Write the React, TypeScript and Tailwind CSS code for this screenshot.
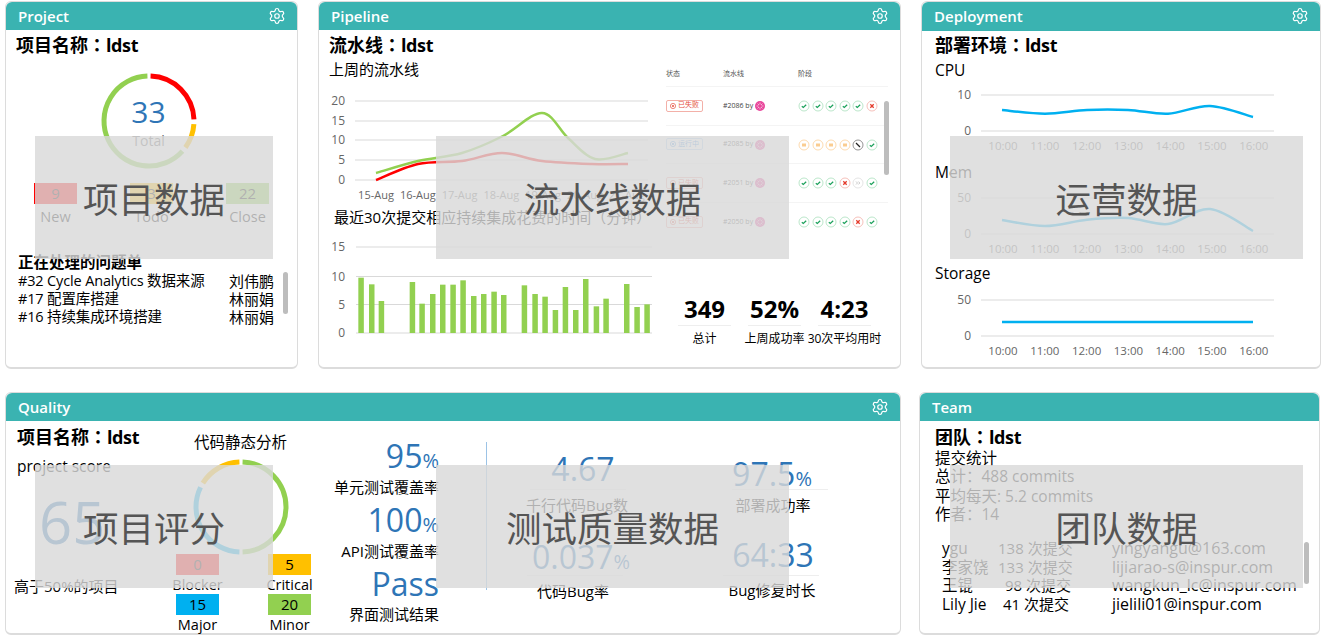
import type { ReactNode } from "react";
import { Settings } from "lucide-react";

const font = "font-['Open_Sans','Noto_Sans_CJK_SC',sans-serif]";

type Pt = [number, number];

// catmull-rom through the points, close enough to the excel style curves
function smooth(pts: Pt[]) {
  let d = `M${pts[0][0]} ${pts[0][1]}`;
  for (let i = 0; i < pts.length - 1; i++) {
    const p0 = pts[i - 1] ?? pts[i];
    const p1 = pts[i];
    const p2 = pts[i + 1];
    const p3 = pts[i + 2] ?? p2;
    const c1x = p1[0] + (p2[0] - p0[0]) / 6;
    const c1y = p1[1] + (p2[1] - p0[1]) / 6;
    const c2x = p2[0] - (p3[0] - p1[0]) / 6;
    const c2y = p2[1] - (p3[1] - p1[1]) / 6;
    d += ` C${c1x} ${c1y} ${c2x} ${c2y} ${p2[0]} ${p2[1]}`;
  }
  return d;
}

function Card({
  title,
  gear,
  className,
  headerClass = "h-[28px]",
  children,
}: {
  title: string;
  gear?: boolean;
  className: string;
  headerClass?: string;
  children: ReactNode;
}) {
  return (
    <div className={`relative rounded-md border border-[#dcdcdc] border-b-2 bg-white ${className}`}>
      <div
        className={`flex items-center justify-between rounded-t-md bg-[#3ab3b1] pl-[12px] pr-[11px] text-[15px] font-semibold text-white ${headerClass}`}
      >
        <span>{title}</span>
        {gear && <Settings size={18} strokeWidth={1.6} className="-mt-[1px]" />}
      </div>
      {children}
    </div>
  );
}

function Heading({ name }: { name: string }) {
  return (
    <div className="h-[24px] -translate-y-[2px] whitespace-nowrap text-[18px] font-bold leading-[24px]">
      {name}
      <span className="font-['Noto_Sans_CJK_TC',sans-serif]">：</span>
      <span className="tracking-[-0.4px]">ldst</span>
    </div>
  );
}

function Overlay({ text, className }: { text: string; className: string }) {
  return (
    <div
      className={`absolute flex h-[123px] items-center justify-center bg-[rgba(217,217,217,0.81)] pt-[4px] text-[35.5px] text-[#555] ${className}`}
    >
      {text}
    </div>
  );
}

function Ring({ segments }: { segments: { from: number; to: number; color: string }[] }) {
  const r = 45;
  const arc = (from: number, to: number) => {
    const a = ((from - 90) * Math.PI) / 180;
    const b = ((to - 90) * Math.PI) / 180;
    const large = to - from > 180 ? 1 : 0;
    return `M${50 + r * Math.cos(a)} ${50 + r * Math.sin(a)} A${r} ${r} 0 ${large} 1 ${50 + r * Math.cos(b)} ${50 + r * Math.sin(b)}`;
  };
  return (
    <svg width="100" height="100" viewBox="0 0 100 100" fill="none">
      {segments.map((s) => (
        <path key={s.from} d={arc(s.from, s.to)} stroke={s.color} strokeWidth="5" />
      ))}
    </svg>
  );
}

function CountBox({
  value,
  label,
  color,
  labelClass = "h-[19px] leading-[19px]",
}: {
  value: string;
  label: string;
  color: string;
  labelClass?: string;
}) {
  return (
    <div className="flex w-[43px] flex-col items-center">
      <div className={`flex h-[21px] w-full items-center justify-center text-[15px] text-black ${color}`}>{value}</div>
      <div className={`whitespace-nowrap text-[14.5px] ${labelClass}`}>{label}</div>
    </div>
  );
}

const issues = [
  { title: "#32 Cycle Analytics 数据来源", who: "刘伟鹏" },
  { title: "#17 配置库搭建", who: "林丽娟" },
  { title: "#16 持续集成环境搭建", who: "林丽娟" },
];

function ProjectCard() {
  return (
    <Card title="Project" gear className="h-[368px] w-[293px]">
      <div className="px-[10px] pt-[4px]">
        <Heading name="项目名称" />
        <div className="relative mx-auto mt-[13px] h-[100px] w-[100px] translate-x-[-3px]">
          <Ring
            segments={[
              { from: 2, to: 88, color: "#ff0000" },
              { from: 94, to: 126, color: "#ffc000" },
              { from: 132, to: 358, color: "#92d050" },
            ]}
          />
          <div className="absolute inset-0 flex flex-col items-center pt-[21px]">
            <span className="text-[30px] leading-[40px] text-[#2e75b6]">33</span>
            <span className="-mt-[1px] text-[14px] leading-[20px] text-[#666]">Total</span>
          </div>
        </div>
        <div className="mt-[12px] flex gap-[53px] pl-[18px]">
          <CountBox value="9" label="New" color="bg-[#ff0000]" labelClass="mt-[3px] leading-[20px]" />
          <CountBox value="3" label="Todo" color="bg-[#ffc000]" labelClass="mt-[3px] leading-[20px]" />
          <CountBox value="22" label="Close" color="bg-[#92d050]" labelClass="mt-[3px] leading-[20px]" />
        </div>
        <div className="mt-[26px] pl-[2px] text-[15.5px] font-bold leading-[18px]">正在处理的问题单</div>
        <div className="relative mt-[1px] pl-[2px] leading-[18px]">
          {issues.map((i) => (
            <div key={i.title} className="flex">
              <span className="w-[211px] whitespace-nowrap text-[14.5px] tracking-[-0.15px]">{i.title}</span>
              <span className="whitespace-nowrap text-[15px]">{i.who}</span>
            </div>
          ))}
          <div className="absolute right-[-1px] top-0 h-[42px] w-[5px] rounded bg-[#bdbdbd]" />
        </div>
      </div>
      <Overlay text="项目数据" className="left-[29px] top-[134px] w-[238px]" />
    </Card>
  );
}

const barData: [number, number][] = [
  [130, 830], [162, 850], [191, 900], [284, 843], [313, 908], [345, 879], [375, 851], [406, 851], [436, 838],
  [468, 885], [498, 879], [529, 872], [558, 882], [620, 853], [652, 879], [682, 887], [713, 927], [743, 858],
  [774, 927], [804, 834], [836, 916], [865, 893], [927, 849], [958, 918], [988, 910],
];

function LineChart() {
  const grid: [string, number][] = [["20", 100], ["15", 120], ["10", 139], ["5", 159], ["0", 179]];
  const days = ["15-Aug", "16-Aug", "17-Aug", "18-Aug", "19-Aug", "20-Aug", "21-Aug"];
  return (
    <svg width="330" height="112" viewBox="330 92 330 112" fill="none" className="block">
      {grid.map(([l, y]) => (
        <g key={l}>
          <line x1="355" x2="648" y1={y} y2={y} stroke="#d9d9d9" />
          <text x="345" y={y + 4} textAnchor="end" fontSize="12" fill="#666">{l}</text>
        </g>
      ))}
      {days.map((d, i) => (
        <text key={d} x={376 + i * 41.8} y="198" textAnchor="middle" fontSize="11" fill="#666">{d}</text>
      ))}
      <path
        d={smooth([[376, 172], [418, 160], [462, 152], [503, 135], [542, 112], [568, 137], [595, 158], [628, 152]])}
        stroke="#92d050"
        strokeWidth="2.5"
      />
      <path
        d={smooth([[376, 179], [418, 163], [462, 160], [502, 152], [542, 160], [592, 163], [628, 163]])}
        stroke="#ff0000"
        strokeWidth="2.5"
      />
    </svg>
  );
}

function BarChart() {
  const grid: [string, number][] = [["15", 246], ["10", 275.5], ["5", 303.5], ["0", 332]];
  return (
    <svg width="330" height="102" viewBox="330 238 330 102" fill="none" className="block">
      {grid.map(([l, y]) => (
        <g key={l}>
          <line x1="356" x2="652" y1={y} y2={y} stroke="#d9d9d9" />
          <text x="345" y={y + 4} textAnchor="end" fontSize="12" fill="#666">{l}</text>
        </g>
      ))}
      {barData.map(([x, top]) => (
        <rect key={x} x={315 + x / 3} y={top / 3} width="5.5" height={332 - top / 3} fill="#92d050" />
      ))}
    </svg>
  );
}

function Stage({ kind }: { kind: string }) {
  const ring: Record<string, string> = {
    c: "#a9e0bd",
    x: "#f3b0a8",
    p: "#fbd09a",
    s: "#777",
    f: "#ddd",
  };
  return (
    <svg width="12" height="12" viewBox="0 0 12 12" fill="none" className="shrink-0">
      <circle cx="6" cy="6" r="5" stroke={ring[kind]} strokeWidth="0.8" />
      {kind === "c" && <path d="M3.8 6.2 5.3 7.5 8.2 4.7" stroke="#1aa05a" strokeWidth="1.2" />}
      {kind === "x" && <path d="M4.3 4.3 7.7 7.7M7.7 4.3 4.3 7.7" stroke="#e53a2b" strokeWidth="1.3" />}
      {kind === "p" && <path d="M5 4.5V7.5M7 4.5V7.5" stroke="#f59a23" strokeWidth="1" />}
      {kind === "s" && <path d="M4 4 8 8" stroke="#222" strokeWidth="1.3" />}
      {kind === "f" && <path d="M4 4.5 5.5 6 4 7.5M6.3 4.5 7.8 6 6.3 7.5" stroke="#bbb" strokeWidth="0.8" />}
    </svg>
  );
}

function StatusDot({ color }: { color: string }) {
  return (
    <svg width="6" height="6" viewBox="0 0 6 6" fill="none" className="shrink-0">
      <circle cx="3" cy="3" r="2.6" stroke={color} strokeWidth="0.7" />
      <circle cx="3" cy="3" r="1" fill={color} />
    </svg>
  );
}

function Avatar() {
  return (
    <svg width="10" height="10" viewBox="0 0 10 10" fill="none" className="shrink-0">
      <circle cx="5" cy="5" r="5" fill="#e8469b" />
      <path d="M5 1.5V3.5M5 6.5V8.5M1.5 5H3.5M6.5 5H8.5M2.6 2.6 4 4M6 6 7.4 7.4M7.4 2.6 6 4M4 6 2.6 7.4" stroke="#fff" strokeWidth="0.6" />
    </svg>
  );
}

const runs = [
  { status: "已失败", blue: false, id: "#2086", stages: "cccccx" },
  { status: "运行中", blue: true, id: "#2085", stages: "ppppsc" },
  { status: "已失败", blue: false, id: "#2051", stages: "cccxfc" },
  { status: "已失败", blue: false, id: "#2050", stages: "ccccxc" },
];

const stats = [
  { value: "349", label: "总计" },
  { value: "52%", label: "上周成功率" },
  { value: "4:23", label: "30次平均用时" },
];

function PipelineCard() {
  return (
    <Card title="Pipeline" gear className="h-[368px] w-[583px]">
      <div className="flex">
        <div className="w-[347px] shrink-0 pl-[10px] pt-[4px]">
          <Heading name="流水线" />
          <div className="mt-[1px] h-[20px] text-[15px] leading-[20px]">上周的流水线</div>
          <div className="ml-[1px] mt-[14px]">
            <LineChart />
          </div>
          <div className="ml-[5px] mt-[2px] h-[20px] whitespace-nowrap text-[15px] leading-[20px]">
            最近30次提交相应持续集成花费的时间（分钟）
          </div>
          <div className="ml-[1px] mt-[12px]">
            <BarChart />
          </div>
        </div>
        <div className="relative w-[222px] pt-[39px]">
          <div className="flex h-[17px] items-start text-[7px] leading-[10px] text-[#555]">
            <span className="w-[57px]">状态</span>
            <span className="w-[75px]">流水线</span>
            <span>阶段</span>
          </div>
          {runs.map((r) => (
            <div key={r.id} className="flex h-[38.7px] items-center border-t border-[#f4f4f4] text-[7px]">
              <div className="w-[57px]">
                <span
                  className={`inline-flex h-[12px] items-center gap-[2px] rounded-[2px] border px-[3px] ${
                    r.blue ? "border-[#b5d5f5] text-[#3f8fe0]" : "border-[#f3b0a8] text-[#e5503f]"
                  }`}
                >
                  <StatusDot color={r.blue ? "#3f8fe0" : "#e5503f"} />
                  {r.status}
                </span>
              </div>
              <div className="flex w-[75px] items-center gap-[2px] text-[#444]">
                {r.id} by
                <Avatar />
              </div>
              <div className="flex gap-[1.6px]">
                {r.stages.split("").map((k, i) => (
                  <Stage key={i} kind={k} />
                ))}
              </div>
            </div>
          ))}
          <div className="absolute left-[218px] top-[71px] h-[74px] w-[5px] rounded bg-[#bdbdbd]" />
          <div className="ml-[12px] mt-[52px] flex gap-[17px]">
            {stats.map((s) => (
              <div key={s.label} className="flex w-[53px] flex-col items-center">
                <div className="h-[32px] whitespace-nowrap border-0 text-[24px] font-bold leading-[32px]">{s.value}</div>
                <div className="h-px w-full bg-[#eee]" />
                <div className="mt-[4px] whitespace-nowrap text-[12px] leading-[18px]">{s.label}</div>
              </div>
            ))}
          </div>
        </div>
      </div>
      <Overlay text="流水线数据" className="left-[117px] top-[134px] w-[353px]" />
    </Card>
  );
}

const times = ["10:00", "11:00", "12:00", "13:00", "14:00", "15:00", "16:00"];

function MiniChart({ top, points }: { top: string; points: Pt[] }) {
  return (
    <svg width="340" height="72" viewBox="935 0 340 72" fill="none" className="block">
      <line x1="981" x2="1274" y1="8" y2="8" stroke="#d9d9d9" />
      <line x1="981" x2="1274" y1="44" y2="44" stroke="#d9d9d9" />
      <text x="971" y="12" textAnchor="end" fontSize="12" fill="#666">{top}</text>
      <text x="971" y="48" textAnchor="end" fontSize="12" fill="#666">0</text>
      {times.map((t, i) => (
        <text key={t} x={1003 + i * 41.8} y="63" textAnchor="middle" fontSize="11.5" fill="#666">{t}</text>
      ))}
      <path d={smooth(points)} stroke="#00b0f0" strokeWidth="2.5" />
    </svg>
  );
}

function DeploymentCard() {
  return (
    <Card title="Deployment" gear headerClass="h-[29px]" className="h-[368px] w-[400px]">
      <div className="pl-[13px] pt-[3px]">
        <Heading name="部署环境" />
        <div className="mt-[2px] h-[20px] text-[15.5px] leading-[20px]">CPU</div>
        <div className="mt-[7px]">
          <MiniChart
            top="10"
            points={[[1002, 23], [1045, 26.7], [1087, 23], [1128, 23], [1168, 26.7], [1210, 19], [1253, 30]]}
          />
        </div>
        <div className="mt-[3px] h-[20px] text-[15.5px] leading-[20px]">Mem</div>
        <div className="mt-[8px]">
          <MiniChart
            top="50"
            points={[[1002, 30], [1045, 36], [1087, 29.7], [1128, 28], [1168, 34], [1210, 19], [1253, 41]]}
          />
        </div>
        <div className="mt-[1px] h-[20px] text-[15.5px] leading-[20px]">Storage</div>
        <div className="mt-[9px]">
          <MiniChart top="50" points={[[1002, 30], [1253, 30]]} />
        </div>
      </div>
      <Overlay text="运营数据" className="left-[28px] top-[134px] w-[353px]" />
    </Card>
  );
}

function Percent({ value, unit }: { value: string; unit?: string }) {
  return (
    <span className="text-[32px] leading-[40px] text-[#2e75b6]">
      {value}
      {unit && <span className="text-[20px]">{unit}</span>}
    </span>
  );
}

const coverage = [
  { value: "95", unit: "%", label: "单元测试覆盖率", gap: "-mt-[4px]" },
  { value: "100", unit: "%", label: "API测试覆盖率", gap: "-mt-[4px]" },
  { value: "Pass", unit: "", label: "界面测试结果", gap: "mt-0" },
];

// the four numbers don't sit on a regular grid in the source, hence the nudges
const quality = [
  { value: "4.67", unit: "", label: "千行代码Bug数", box: "ml-[-2px]", val: "translate-x-[5px]", lab: "-translate-x-[1px]" },
  { value: "97.5", unit: "%", label: "部署成功率", box: "ml-[-1px]", val: "-translate-x-[8px] translate-y-[5px]", lab: "-translate-x-[7px]" },
  { value: "0.037", unit: "%", label: "代码Bug率", box: "ml-[-5px]", val: "translate-x-[6px] translate-y-[2px]", lab: "-translate-x-[2px]" },
  { value: "64:33", unit: "", label: "Bug修复时长", box: "ml-[-10px]", val: "translate-x-[2px]", lab: "translate-x-[1px] -translate-y-[1px]" },
];

function QualityCard() {
  return (
    <Card title="Quality" gear className="h-[243px] w-[896px]">
      <div className="flex">
        <div className="w-[170px] shrink-0 pl-[11px] pt-[5px]">
          <Heading name="项目名称" />
          <div className="mt-[6px] h-[20px] text-[15.5px] leading-[20px]">project score</div>
          <div className="ml-[22px] mt-[4px] h-[84px] text-[58px] leading-[84px] text-[#2e75b6]">65</div>
          <div className="-ml-[3px] mt-[12px] text-[15px] leading-[20px]">高于50%的项目</div>
        </div>
        <div className="flex w-[135px] shrink-0 flex-col items-center pt-[10px]">
          <div className="h-[22px] -translate-x-[3px] whitespace-nowrap text-[15.5px] leading-[22px]">代码静态分析</div>
          <div className="mt-[4px] -translate-x-[3px]">
            <Ring
              segments={[
                { from: 2, to: 178, color: "#92d050" },
                { from: 182, to: 296, color: "#00b0f0" },
                { from: 302, to: 358, color: "#ffc000" },
              ]}
            />
          </div>
          <div className="-mt-[3px] grid w-full grid-cols-2 gap-x-[49px]">
            <CountBox value="0" label="Blocker" color="bg-[#ff0000]" />
            <CountBox value="5" label="Critical" color="bg-[#ffc000]" />
            <CountBox value="15" label="Major" color="bg-[#00b0f0]" />
            <CountBox value="20" label="Minor" color="bg-[#92d050]" />
          </div>
        </div>
        <div className="flex w-[128px] shrink-0 flex-col items-end pt-[15px]">
          {coverage.map((c) => (
            <div key={c.label} className="mb-[2px] flex h-[62px] flex-col items-end">
              <Percent value={c.value} unit={c.unit} />
              <div className={`whitespace-nowrap text-[15px] leading-[20px] ${c.gap}`}>{c.label}</div>
            </div>
          ))}
        </div>
        <div className="ml-[47px] mt-[21px] h-[148px] w-px bg-[#9cc3e6]" />
        <div className="ml-[45px] grid w-[297px] grid-cols-2 content-start gap-x-[105px] pt-[28px]">
          {quality.map((q) => (
            <div key={q.label} className={`flex h-[86px] w-[96px] flex-col items-center ${q.box}`}>
              <div className={`h-[40px] whitespace-nowrap ${q.val}`}>
                <Percent value={q.value} unit={q.unit} />
              </div>
              <div className="h-px w-full bg-[#eee]" />
              <div className={`mt-[5px] whitespace-nowrap text-[15px] leading-[20px] ${q.lab}`}>{q.label}</div>
            </div>
          ))}
        </div>
      </div>
      <Overlay text="项目评分" className="left-[29px] top-[72px] w-[238px]" />
      <Overlay text="测试质量数据" className="left-[430px] top-[72px] w-[353px]" />
    </Card>
  );
}

const members = [
  { name: "ygu", count: "138 次提交", pad: "", mail: "yingyangu@163.com" },
  { name: "李家饶", count: "133 次提交", pad: "", mail: "lijiarao-s@inspur.com" },
  { name: "王锟", count: "98 次提交", pad: "pl-[7px]", mail: "wangkun_lc@inspur.com" },
  { name: "Lily Jie", count: "41 次提交", pad: "pl-[5px]", mail: "jielili01@inspur.com" },
];

function TeamCard() {
  return (
    <Card title="Team" className="h-[243px] w-[401px]">
      <div className="relative pl-[15px] pt-[5px]">
        <Heading name="团队" />
        <div className="-mt-[1px] text-[15.5px] leading-[18px]">
          <div className="h-[18px]">提交统计</div>
          <div className="h-[20px] leading-[19px]">总计：488 commits</div>
          <div className="h-[18px]">平均每天: 5.2 commits</div>
          <div className="h-[18px]">作者：14</div>
        </div>
        <div className="ml-[7px] mt-[16px] leading-[18.7px]">
          {members.map((m) => (
            <div key={m.mail} className="flex whitespace-nowrap">
              <span className="w-[56px] text-[15.5px]">{m.name}</span>
              <span className={`w-[114px] text-[15px] ${m.pad}`}>{m.count}</span>
              <span className="text-[16px]">{m.mail}</span>
            </div>
          ))}
        </div>
        <div className="absolute left-[384px] top-[121px] h-[42px] w-[5px] rounded bg-[#bdbdbd]" />
      </div>
      <Overlay text="团队数据" className="left-[30px] top-[72px] w-[353px]" />
    </Card>
  );
}

export default function App() {
  return (
    <div className={`h-[644px] w-[1321px] overflow-hidden bg-white pl-[5px] pt-px text-black ${font}`}>
      <div className="flex gap-[20px]">
        <ProjectCard />
        <PipelineCard />
        <DeploymentCard />
      </div>
      <div className="mt-[23px] flex gap-[18px]">
        <QualityCard />
        <TeamCard />
      </div>
    </div>
  );
}
